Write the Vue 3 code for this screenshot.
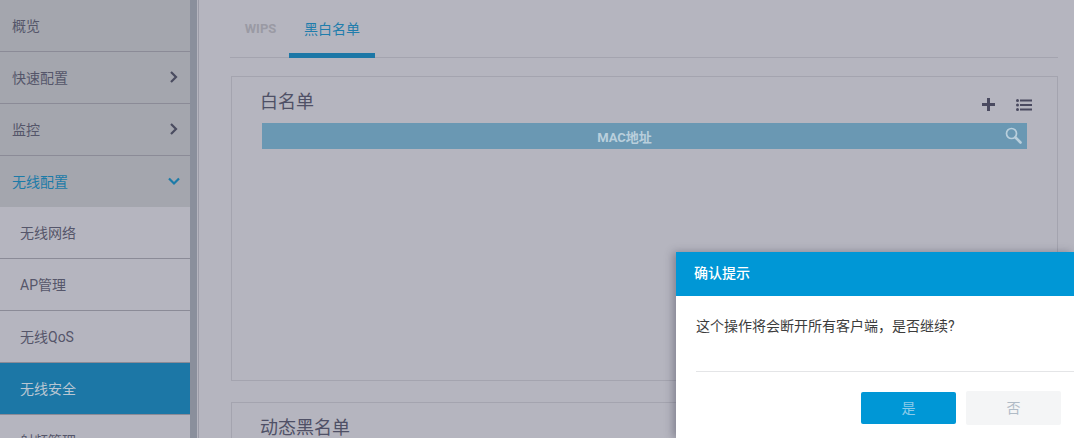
<script setup>
const menu = [
  { label: '概览', top: true },
  { label: '快速配置', top: true, arrow: 'right' },
  { label: '监控', top: true, arrow: 'right' },
  { label: '无线配置', top: true, arrow: 'down', open: true },
  { label: '无线网络' },
  { label: 'AP管理' },
  { label: '无线QoS' },
  { label: '无线安全', active: true },
  { label: '射频管理' },
]
</script>

<template>
  <div class="page">
    <aside class="sidebar">
      <div
        v-for="m in menu"
        :key="m.label"
        class="item"
        :class="{ top: m.top, open: m.open, active: m.active }"
      >
        <span>{{ m.label }}</span>
        <svg v-if="m.arrow === 'right'" class="arrow" width="10" height="12" viewBox="0 0 10 12">
          <path d="M2 1l5 5-5 5" fill="none" stroke="#4a4c60" stroke-width="2.2" />
        </svg>
        <svg v-if="m.arrow === 'down'" class="arrow down" width="12" height="10" viewBox="0 0 12 10">
          <path d="M1 2.500l5 5 5-5" fill="none" stroke="#1c7ba8" stroke-width="2.2" />
        </svg>
      </div>
    </aside>
    <div class="scrollbar"></div>
    <main class="main">
      <nav class="tabs">
        <div class="tab muted">WIPS</div>
        <div class="tab current">黑白名单</div>
      </nav>
      <section class="card first">
        <div class="card-head">
          <h2>白名单</h2>
          <div class="tools">
            <svg width="13" height="13" viewBox="0 0 13 13">
              <path d="M5 0h3v5h5v3H8v5H5V8H0V5h5z" fill="#4a4a60" />
            </svg>
            <svg width="16" height="12" viewBox="0 0 16 12">
              <g fill="#4a4a60">
                <circle cx="1.500" cy="1.500" r="1.500" /><circle cx="1.500" cy="6" r="1.500" /><circle cx="1.500" cy="10.500" r="1.500" />
                <rect x="4" y="0.500" width="12" height="2" /><rect x="4" y="5" width="12" height="2" /><rect x="4" y="9.500" width="12" height="2" />
              </g>
            </svg>
          </div>
        </div>
        <div class="table-head">
          <span>MAC地址</span>
          <svg class="search" width="17" height="17" viewBox="0 0 17 17">
            <circle cx="6.500" cy="6.500" r="5" fill="none" stroke="#b9cfdc" stroke-width="1.700" />
            <path d="M10.500 10.500l5 5" stroke="#b9cfdc" stroke-width="2.600" stroke-linecap="round" />
          </svg>
        </div>
      </section>
      <section class="card second">
        <h2>动态黑名单</h2>
      </section>
    </main>
    <div class="dialog">
      <header class="dialog-head">确认提示</header>
      <p class="dialog-text">这个操作将会断开所有客户端，是否继续?</p>
      <div class="dialog-foot">
        <button class="btn yes">是</button>
        <button class="btn no">否</button>
      </div>
    </div>
  </div>
</template>

<style>
html, body { margin: 0; overflow: hidden; }
</style>

<style scoped>
.page {
  position: relative;
  width: 1074px;
  height: 438px;
  overflow: hidden;
  display: flex;
  background: #b5b5bf;
  font-family: "Roboto", "Noto Sans CJK SC", sans-serif;
  font-size: 14px;
  color: #55566a;
}
.sidebar { width: 190px; flex: none; }
.item {
  border-bottom: 1px solid #8b8b97;
  padding-left: 20px;
  padding-right: 11px;
  padding-bottom: 1px;
  display: flex;
  align-items: center;
  justify-content: space-between;
  box-sizing: border-box;
  height: 52px;
}
.item.top {
  background: #a4a6ae;
  padding-left: 12px;
  padding-bottom: 2px;
}
.item.open { color: #1c7ba8; border-bottom: 0; height: 51px; padding-bottom: 2px; }
.item.active { background: #1c77a6; color: #b9c6d2; }
.arrow.down { margin-right: -1px; }
.scrollbar {
  width: 7px;
  flex: none;
  background: #8a8f9c;
  border-right: 1px solid #b5b5bf;
  box-sizing: content-box;
}
.main {
  flex: 1;
  min-width: 0;
  border-left: 1px solid #9c9ca8;
  padding-left: 32px;
  padding-right: 16px;
}
.tabs {
  display: flex;
  height: 57px;
  border-bottom: 1px solid #a4a4af;
  margin-left: -1px;
}
.tab {
  width: 86px;
  display: flex;
  align-items: center;
  justify-content: center;
  height: 58px;
  box-sizing: border-box;
  padding-bottom: 2px;
}
.tab.muted { width: 59px; color: #9a9aa4; font-weight: 700; font-size: 13px; padding-left: 2px; }
.tab.current { color: #1f7dac; border-bottom: 5px solid #1c77a6; padding-top: 5px; }
.card {
  border: 1px solid #a4a4af;
  padding: 0 30px 0 28px;
}
.card.first { height: 303px; margin-top: 18px; }
.card.second { margin-top: 21px; height: 60px; }
.card-head {
  display: flex;
  justify-content: space-between;
  align-items: flex-start;
  height: 46px;
}
h2 {
  margin: 0;
  padding-top: 12px;
  font-size: 18px;
  font-weight: 400;
  line-height: 26px;
  color: #4f5066;
}
.tools {
  display: flex;
  gap: 21px;
  align-items: center;
  padding-top: 21px;
  margin-right: -5px;
}
.table-head {
  position: relative;
  height: 26px;
  background: #6a98b3;
  color: #b9cfdc;
  font-weight: 700;
  font-size: 13px;
  display: flex;
  align-items: center;
  justify-content: center;
  padding-right: 40px;
  margin-left: 2px;
}
.search { position: absolute; right: 5px; top: 4px; }
.dialog {
  position: absolute;
  left: 676px;
  top: 252px;
  width: 398px;
  height: 186px;
  background: #fff;
  box-shadow: -3px 0 8px rgba(40, 40, 60, 0.35);
}
.dialog-head {
  height: 44px;
  background: #0097d6;
  color: #fff;
  font-weight: 500;
  font-size: 14px;
  line-height: 42px;
  padding-left: 18px;
}
.dialog-text {
  margin: 0 0 0 20px;
  height: 76px;
  box-sizing: border-box;
  padding-top: 20px;
  line-height: 20px;
  font-size: 14px;
  color: #3c3c3c;
  border-bottom: 1px solid #e4e5e7;
}
.dialog-foot {
  display: flex;
  justify-content: flex-end;
  align-items: center;
  gap: 10px;
  padding-top: 19px;
  padding-right: 13px;
}
.btn {
  width: 95px;
  border: 0;
  border-radius: 2px;
  font: inherit;
  font-size: 14px;
  padding: 0 0 2px;
}
.btn.yes { height: 32px; background: #0097d6; color: #8ccbe9; }
.btn.no { height: 34px; background: #f4f5f6; color: #b0bbc6; }
</style>
